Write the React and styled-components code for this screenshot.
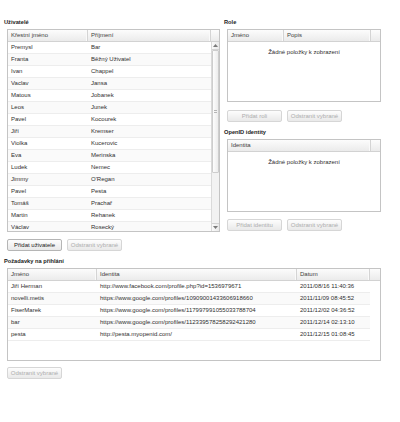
import React from "react";
import styled, { createGlobalStyle } from "styled-components";

const Global = createGlobalStyle`
  html, body { margin: 0; padding: 0; background: #fff; }
  body { font-family: "Liberation Sans", Arial, sans-serif; }
`;

const Page = styled.div`
  padding: 18px 0 0 4px;
  width: 396px;
  box-sizing: border-box;
`;

const TopRow = styled.div`
  display: flex;
  gap: 4px;
  align-items: flex-start;
`;

const Column = styled.div`
  width: ${(p) => p.$w}px;
  flex: none;
  display: flex;
  flex-direction: column;
`;

const Section = styled.div`
  display: flex;
  flex-direction: column;
  margin-top: ${(p) => p.$mt || 0}px;
`;

const Title = styled.div`
  font-size: 5.7px;
  font-weight: bold;
  line-height: 8px;
  height: 8px;
  color: #1a1a1a;
  margin-bottom: 3px;
  white-space: nowrap;
`;

const GridBox = styled.div`
  margin-left: 3px;
  width: ${(p) => p.$w}px;
  height: ${(p) => p.$h}px;
  box-sizing: border-box;
  border: 1px solid #c4c4c4;
  display: flex;
  flex-direction: column;
  background: #fff;
  overflow: hidden;
`;

const HeaderRow = styled.div`
  display: flex;
  height: 12px;
  flex: none;
  box-sizing: border-box;
  border-bottom: 1px solid #d2d2d2;
  background: linear-gradient(#fcfcfc, #ebebeb);
`;

const HeaderCell = styled.div`
  width: ${(p) => p.$w}px;
  flex: none;
  box-sizing: border-box;
  border-right: 1px solid #d4d4d4;
  box-shadow: inset -1px 0 0 #fafafa;
  padding-left: 3px;
  font-size: 6px;
  line-height: 11px;
  color: #404040;
  white-space: nowrap;
  overflow: hidden;
`;

const ScrollerHeader = styled.div`
  flex: 1;
`;

const Body = styled.div`
  flex: 1;
  min-height: 0;
  display: flex;
  overflow: hidden;
`;

const Rows = styled.div`
  width: ${(p) => p.$w}px;
  flex: none;
  overflow: hidden;
`;

const Row = styled.div`
  display: flex;
  height: 12px;
  box-sizing: border-box;
  border-bottom: 1px solid #ededed;
  background: ${(p) => (p.$alt ? "#fafafa" : "#fff")};
`;

const Cell = styled.div`
  width: ${(p) => p.$w}px;
  flex: none;
  box-sizing: border-box;
  padding-left: 3px;
  font-size: 6px;
  line-height: 11px;
  color: #303030;
  white-space: nowrap;
  overflow: hidden;
`;

const Empty = styled.div`
  flex: 1;
  padding-top: 6px;
  text-align: center;
  font-size: 6px;
  line-height: 8px;
  color: #303030;
`;

const ScrollBar = styled.div`
  width: 8px;
  flex: none;
  box-sizing: border-box;
  border-left: 1px solid #dadada;
  background: #f2f2f2;
  display: flex;
  flex-direction: column;
`;

const ScrollArrow = styled.div`
  height: 8px;
  flex: none;
  display: flex;
  align-items: center;
  justify-content: center;
  background: linear-gradient(90deg, #fafafa, #e9e9e9);
  border-bottom: ${(p) => (p.$down ? "none" : "1px solid #d4d4d4")};
  border-top: ${(p) => (p.$down ? "1px solid #d4d4d4" : "none")};
  box-sizing: border-box;
`;

const Thumb = styled.div`
  height: 123px;
  flex: none;
  box-sizing: border-box;
  border: 1px solid #cdcdcd;
  border-radius: 1px;
  background: linear-gradient(90deg, #fdfdfd, #ececec);
  display: flex;
  align-items: center;
  justify-content: center;
`;

const Grip = styled.div`
  width: 3px;
  height: 3px;
  border-top: 1px solid #b5b5b5;
  border-bottom: 1px solid #b5b5b5;
  box-sizing: border-box;
`;

const Track = styled.div`
  flex: 1;
`;

const ButtonRow = styled.div`
  display: flex;
  gap: 5px;
  margin-left: 3px;
  margin-top: ${(p) => p.$mt}px;
`;

const Button = styled.button`
  width: 55px;
  height: 12px;
  box-sizing: border-box;
  padding: 0;
  margin: 0;
  border: 1px solid ${(p) => (p.disabled ? "#d6d6d6" : "#b5b5b5")};
  border-radius: 2px;
  background: linear-gradient(#fdfdfd, #e9e9e9);
  font-family: "Liberation Sans", Arial, sans-serif;
  font-size: 6px;
  line-height: 10px;
  color: ${(p) => (p.disabled ? "#adadad" : "#222")};
  white-space: nowrap;
  text-align: center;
  overflow: hidden;
`;

const Arrow = ({ down }) => (
  <svg width="5" height="3" viewBox="0 0 5 3">
    <path d={down ? "M0 0 L5 0 L2.5 3 Z" : "M0 3 L5 3 L2.5 0 Z"} fill="#7a7a7a" />
  </svg>
);

const users = [
  ["Premysl", "Bar"],
  ["Franta", "Běžný Uživatel"],
  ["Ivan", "Chappel"],
  ["Vaclav", "Jansa"],
  ["Matous", "Jobanek"],
  ["Leos", "Junek"],
  ["Pavel", "Kocourek"],
  ["Jiří", "Kremser"],
  ["Violka", "Kucerovic"],
  ["Eva", "Merinska"],
  ["Ludek", "Nemec"],
  ["Jimmy", "O'Regan"],
  ["Pavel", "Pesta"],
  ["Tomáš", "Prachař"],
  ["Martin", "Rehanek"],
  ["Václav", "Rosecký"],
];

const requests = [
  ["Jiří Herman", "http://www.facebook.com/profile.php?id=1536979671", "2011/08/16 11:40:36"],
  ["novelli.metis", "https://www.google.com/profiles/10909001433606918660", "2011/11/09 08:45:52"],
  ["FiserMarek", "https://www.google.com/profiles/117997991055033788704", "2011/12/02 04:36:52"],
  ["bar", "https://www.google.com/profiles/112339578258292421280", "2011/12/14 02:13:10"],
  ["pesta", "http://pesta.myopenid.com/", "2011/12/15 01:08:45"],
];

const userCols = [80, 123];
const reqCols = [89, 200, 73];

export default function App() {
  return (
    <>
      <Global />
      <Page>
        <TopRow>
          <Column $w={216}>
            <Section>
              <Title>Uživatelé</Title>
              <GridBox $w={213} $h={203}>
                <HeaderRow>
                  <HeaderCell $w={userCols[0]}>Křestní jméno</HeaderCell>
                  <HeaderCell $w={userCols[1]}>Příjmení</HeaderCell>
                  <ScrollerHeader />
                </HeaderRow>
                <Body>
                  <Rows $w={203}>
                    {users.map(([a, b], i) => (
                      <Row key={i} $alt={i % 2 === 1}>
                        <Cell $w={userCols[0]}>{a}</Cell>
                        <Cell $w={userCols[1]}>{b}</Cell>
                      </Row>
                    ))}
                  </Rows>
                  <ScrollBar>
                    <ScrollArrow>
                      <Arrow />
                    </ScrollArrow>
                    <Thumb>
                      <Grip />
                    </Thumb>
                    <Track />
                    <ScrollArrow $down>
                      <Arrow down />
                    </ScrollArrow>
                  </ScrollBar>
                </Body>
              </GridBox>
              <ButtonRow $mt={7}>
                <Button>Přidat uživatele</Button>
                <Button disabled>Odstranit vybrané</Button>
              </ButtonRow>
            </Section>
          </Column>
          <Column $w={157}>
            <Section>
              <Title>Role</Title>
              <GridBox $w={154} $h={73}>
                <HeaderRow>
                  <HeaderCell $w={56}>Jméno</HeaderCell>
                  <HeaderCell $w={87}>Popis</HeaderCell>
                  <ScrollerHeader />
                </HeaderRow>
                <Empty>Žádné položky k zobrazení</Empty>
              </GridBox>
              <ButtonRow $mt={8}>
                <Button disabled>Přidat roli</Button>
                <Button disabled>Odstranit vybrané</Button>
              </ButtonRow>
            </Section>
            <Section $mt={6}>
              <Title>OpenID identity</Title>
              <GridBox $w={154} $h={73}>
                <HeaderRow>
                  <HeaderCell $w={143}>Identita</HeaderCell>
                  <ScrollerHeader />
                </HeaderRow>
                <Empty>Žádné položky k zobrazení</Empty>
              </GridBox>
              <ButtonRow $mt={7}>
                <Button disabled>Přidat identitu</Button>
                <Button disabled>Odstranit vybrané</Button>
              </ButtonRow>
            </Section>
          </Column>
        </TopRow>
        <Section $mt={6}>
          <Title>Požadavky na přihlání</Title>
          <GridBox $w={374} $h={93}>
            <HeaderRow>
              <HeaderCell $w={reqCols[0]}>Jméno</HeaderCell>
              <HeaderCell $w={reqCols[1]}>Identita</HeaderCell>
              <HeaderCell $w={reqCols[2]}>Datum</HeaderCell>
              <ScrollerHeader />
            </HeaderRow>
            <Body>
              <Rows $w={362}>
                {requests.map((r, i) => (
                  <Row key={i} $alt={i % 2 === 1}>
                    {r.map((v, j) => (
                      <Cell key={j} $w={reqCols[j]}>
                        {v}
                      </Cell>
                    ))}
                  </Row>
                ))}
              </Rows>
            </Body>
          </GridBox>
          <ButtonRow $mt={6}>
            <Button disabled>Odstranit vybrané</Button>
          </ButtonRow>
        </Section>
      </Page>
    </>
  );
}
